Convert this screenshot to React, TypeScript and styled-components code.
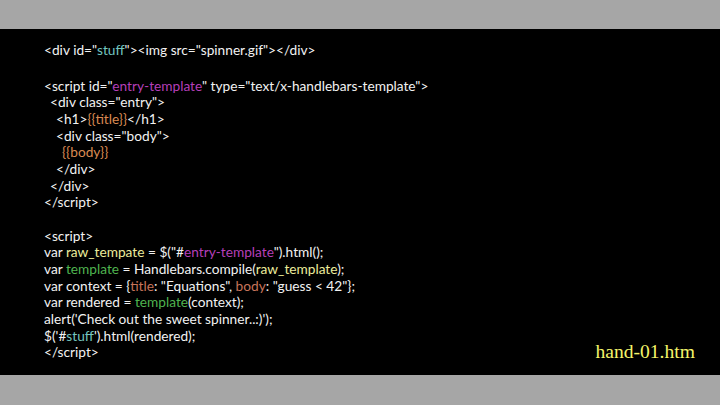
import React from "react";
import styled, { createGlobalStyle } from "styled-components";

const Global = createGlobalStyle`
  html, body { margin: 0; padding: 0; background: #a6a6a6; }
  #root { width: 720px; height: 405px; }
`;

const Page = styled.div`
  width: 720px;
  height: 405px;
  display: flex;
  flex-direction: column;
  padding: 29px 0 30px;
  box-sizing: border-box;
  background: #a6a6a6;
`;

const Slide = styled.div`
  flex: 1;
  min-height: 0;
  overflow: hidden;
  background: #000;
  display: flex;
  justify-content: space-between;
  align-items: flex-end;
  padding: 0 25px 11px 44px;
`;

const Code = styled.div`
  align-self: flex-start;
  padding-top: 13px;
  font-family: Lato, "Noto Sans", sans-serif;
  font-size: 13.7px;
  color: #f2f2f2;
  white-space: pre;
`;

const Block = styled.div<{ $gap?: number }>`
  margin-top: ${(p) => p.$gap ?? 0}px;
`;

const Line = styled.div<{ $indent?: number }>`
  height: 16.67px;
  line-height: 16.67px;
  padding-left: ${(p) => (p.$indent ?? 0) * 6}px;
`;

const C = styled.span<{ $c: string }>`
  color: ${(p) => p.$c};
`;

const Label = styled.div`
  font-family: "Liberation Serif", serif;
  font-size: 19.6px;
  color: #f4f46a;
  line-height: 24px;
`;

const TEAL = "#74c7c0";
const PURPLE = "#b53fb8";
const ORANGE = "#d98a52";
const GREEN = "#4fb34f";
const YELLOW = "#ecec9c";
const BROWN = "#c8745a";

export default function App() {
  return (
    <>
      <Global />
      <Page>
        <Slide>
          <Code>
            <Block>
              <Line>
                {'<div id="'}<C $c={TEAL}>stuff</C>{'"><img src="spinner.gif"></div>'}
              </Line>
            </Block>
            <Block $gap={19}>
              <Line>
                {'<script id="'}<C $c={PURPLE}>entry-template</C>{'" type="text/x-handlebars-template">'}
              </Line>
              <Line $indent={1}>{'<div class="entry">'}</Line>
              <Line $indent={2}>
                {"<h1>"}<C $c={ORANGE}>{"{{title}}"}</C>{"</h1>"}
              </Line>
              <Line $indent={2}>{'<div class="body">'}</Line>
              <Line $indent={3}>
                <C $c={ORANGE}>{"{{body}}"}</C>
              </Line>
              <Line $indent={2}>{"</div>"}</Line>
              <Line $indent={1}>{"</div>"}</Line>
              <Line>{"</script>"}</Line>
              <Line />
              <Line>{"<script>"}</Line>
              <Line>
                {"var "}<C $c={YELLOW}>raw_tempate</C>{' = $("#'}<C $c={PURPLE}>entry-template</C>{'").html();'}
              </Line>
              <Line>
                {"var "}<C $c={GREEN}>template</C>{" = Handlebars.compile("}<C $c={YELLOW}>raw_template</C>{");"}
              </Line>
              <Line>
                {"var context = {"}<C $c={BROWN}>title</C>{': "Equations", '}<C $c={BROWN}>body</C>{': "guess < 42"};'}
              </Line>
              <Line>
                {"var rendered = "}<C $c={GREEN}>template</C>{"(context);"}
              </Line>
              <Line>{"alert('Check out the sweet spinner..:)');"}</Line>
              <Line>
                {"$('#"}<C $c={TEAL}>stuff</C>{"').html(rendered);"}
              </Line>
              <Line>{"</script>"}</Line>
            </Block>
          </Code>
          <Label>hand-01.htm</Label>
        </Slide>
      </Page>
    </>
  );
}
